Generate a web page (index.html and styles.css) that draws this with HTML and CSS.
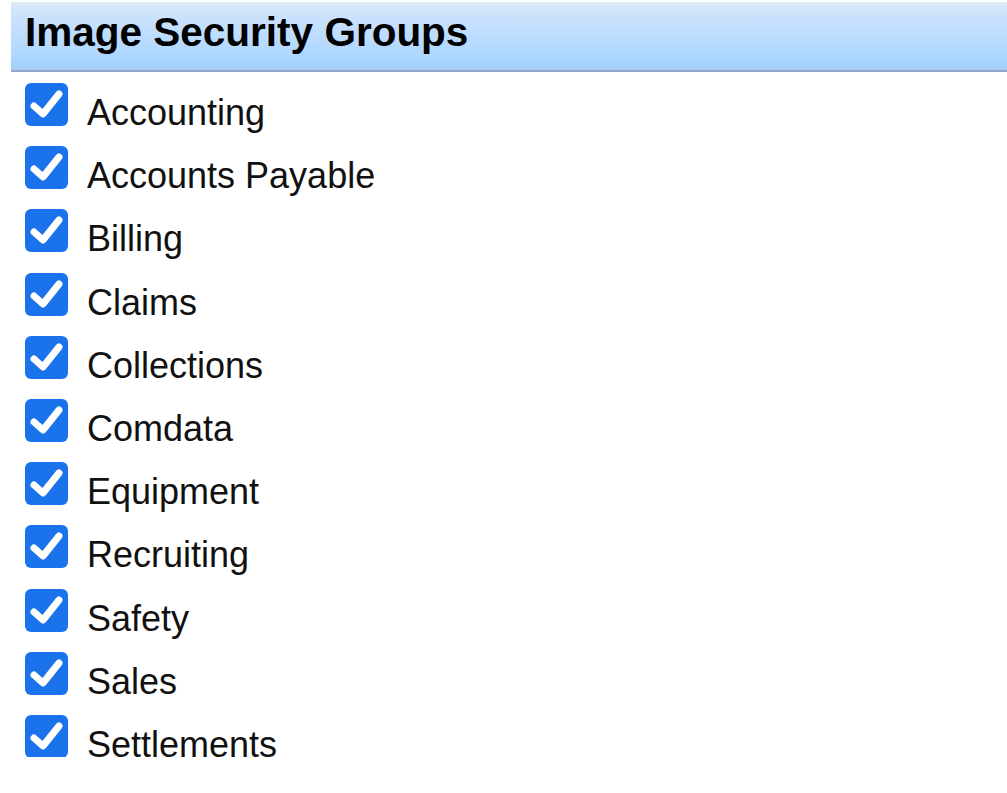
FILE: index.html
```html
<!DOCTYPE html>
<html lang="en">
<head>
    <meta charset="UTF-8">
    <title>Image Security Groups</title>
    <link rel="stylesheet" href="styles.css">
</head>
<body>
    <div id="panel">
        <h2 class="panel-title">Image Security Groups</h2>

        <ul class="group-list">
            <li class="group"><span class="check"><svg viewBox="0 0 43 43"><rect width="43" height="43" rx="6"/><path d="M9 23 L18 31 L34 11"/></svg></span><span class="group-name">Accounting</span></li>
            <li class="group"><span class="check"><svg viewBox="0 0 43 43"><rect width="43" height="43" rx="6"/><path d="M9 23 L18 31 L34 11"/></svg></span><span class="group-name">Accounts Payable</span></li>
            <li class="group"><span class="check"><svg viewBox="0 0 43 43"><rect width="43" height="43" rx="6"/><path d="M9 23 L18 31 L34 11"/></svg></span><span class="group-name">Billing</span></li>
            <li class="group"><span class="check"><svg viewBox="0 0 43 43"><rect width="43" height="43" rx="6"/><path d="M9 23 L18 31 L34 11"/></svg></span><span class="group-name">Claims</span></li>
            <li class="group"><span class="check"><svg viewBox="0 0 43 43"><rect width="43" height="43" rx="6"/><path d="M9 23 L18 31 L34 11"/></svg></span><span class="group-name">Collections</span></li>
            <li class="group"><span class="check"><svg viewBox="0 0 43 43"><rect width="43" height="43" rx="6"/><path d="M9 23 L18 31 L34 11"/></svg></span><span class="group-name">Comdata</span></li>
            <li class="group"><span class="check"><svg viewBox="0 0 43 43"><rect width="43" height="43" rx="6"/><path d="M9 23 L18 31 L34 11"/></svg></span><span class="group-name">Equipment</span></li>
            <li class="group"><span class="check"><svg viewBox="0 0 43 43"><rect width="43" height="43" rx="6"/><path d="M9 23 L18 31 L34 11"/></svg></span><span class="group-name">Recruiting</span></li>
            <li class="group"><span class="check"><svg viewBox="0 0 43 43"><rect width="43" height="43" rx="6"/><path d="M9 23 L18 31 L34 11"/></svg></span><span class="group-name">Safety</span></li>
            <li class="group"><span class="check"><svg viewBox="0 0 43 43"><rect width="43" height="43" rx="6"/><path d="M9 23 L18 31 L34 11"/></svg></span><span class="group-name">Sales</span></li>
            <li class="group"><span class="check"><svg viewBox="0 0 43 43"><rect width="43" height="43" rx="6"/><path d="M9 23 L18 31 L34 11"/></svg></span><span class="group-name">Settlements</span></li>
        </ul>
    </div>
</body>
</html>
```

FILE: styles.css
```css
body {
    font-family: "Liberation Sans", Arial, sans-serif;
    margin: 0;
    padding: 0;
    background-color: #fff;
    color: #111;
}

#panel {
    padding: 2px 0 0 11px;
}

.panel-title {
    margin: 0;
    height: 68px;
    line-height: 60px;
    padding-left: 14px;
    font-size: 40.5px;
    font-weight: bold;
    color: #000;
    background: linear-gradient(to bottom, #dfeaf6 0%, #d2e5fb 10%, #c2defe 40%, #b1d8ff 75%, #a3d3ff 92%, #a9cdf2 100%);
    border-bottom: 2px solid #8fa8c8;
}

.group-list {
    list-style: none;
    margin: 0;
    padding: 11px 0 0 14px;
    height: 674px;
    overflow: hidden;
}

.group {
    display: flex;
    align-items: flex-start;
    height: 63.2px;
}

.check {
    width: 43px;
    height: 43px;
    flex-shrink: 0;
}

.check svg {
    display: block;
    width: 43px;
    height: 43px;
}

.check rect {
    fill: #1a73ea;
}

.check path {
    fill: none;
    stroke: #fff;
    stroke-width: 7;
    stroke-linecap: round;
    stroke-linejoin: round;
}

.group-name {
    margin: 10px 0 0 19px;
    font-size: 36px;
    line-height: 40px;
}
```
